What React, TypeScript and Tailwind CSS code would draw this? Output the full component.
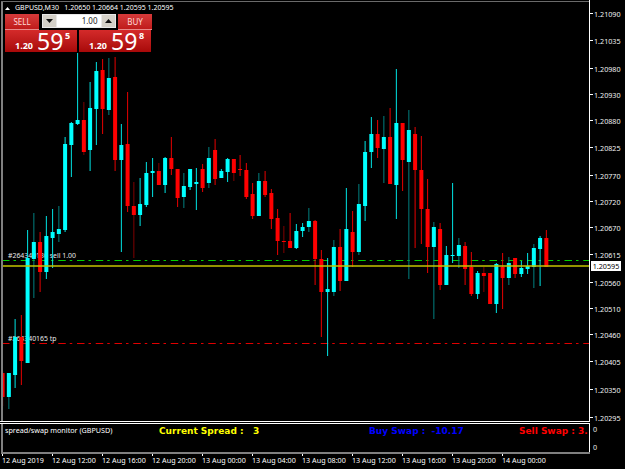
const CYAN = "#00ffff";
const RED = "#ff0000";
// [wickTop, bodyTop, bodyBottom, wickBottom, up(1)/down(0), dimmed wick(1)]
const candles: number[][] = [
  [371, 373, 397, 406, 0, 0], [373, 373, 397, 409, 1, 1], [319, 337, 375, 388, 1, 0], [315, 337, 361, 385, 0, 0],
  [230, 258, 363, 363, 1, 0], [213, 242, 259, 298, 1, 1], [232, 242, 272, 292, 0, 0], [216, 236, 272, 279, 1, 0],
  [209, 232, 238, 268, 1, 0], [206, 229, 234, 242, 1, 1], [137, 144, 230, 232, 1, 0], [122, 123, 145, 177, 1, 0],
  [53, 120, 124, 125, 1, 0], [102, 120, 152, 155, 0, 1], [82, 108, 150, 171, 1, 0], [62, 71, 109, 145, 1, 0],
  [59, 70, 109, 134, 0, 0], [58, 78, 110, 115, 1, 1], [57, 77, 160, 171, 0, 0], [124, 145, 160, 252, 1, 0],
  [92, 144, 206, 212, 0, 0], [182, 206, 215, 258, 0, 1], [178, 204, 215, 226, 1, 0], [162, 173, 205, 207, 1, 0],
  [158, 171, 173, 197, 1, 0], [163, 171, 185, 185, 0, 1], [157, 158, 185, 193, 1, 0], [137, 158, 169, 175, 0, 0],
  [169, 169, 198, 207, 0, 0], [173, 186, 197, 208, 1, 1], [169, 169, 187, 190, 1, 0], [168, 182, 184, 210, 1, 0],
  [164, 169, 188, 192, 0, 0], [147, 158, 183, 188, 1, 1], [139, 150, 179, 185, 0, 0], [169, 171, 178, 178, 1, 0],
  [158, 159, 172, 182, 1, 0], [159, 159, 173, 181, 0, 1], [155, 169, 170, 176, 0, 0], [163, 170, 197, 199, 0, 0],
  [183, 194, 216, 219, 0, 0], [173, 181, 216, 216, 1, 1], [171, 181, 195, 197, 0, 0], [189, 193, 219, 229, 0, 0],
  [209, 218, 241, 255, 0, 0], [226, 241, 242, 253, 0, 1], [213, 241, 248, 248, 0, 0], [224, 231, 248, 249, 1, 0],
  [223, 227, 231, 237, 1, 0], [208, 221, 227, 232, 1, 1], [220, 221, 259, 285, 0, 0], [250, 259, 292, 337, 0, 0],
  [258, 289, 292, 356, 1, 0], [240, 247, 292, 296, 1, 1], [229, 247, 281, 291, 0, 0], [188, 229, 281, 281, 1, 0],
  [211, 232, 252, 267, 0, 0], [184, 204, 252, 255, 1, 1], [141, 152, 206, 221, 1, 0], [117, 134, 152, 168, 1, 0],
  [120, 134, 148, 158, 0, 0], [116, 137, 149, 183, 1, 1], [108, 137, 184, 184, 0, 0], [69, 123, 185, 219, 1, 0],
  [123, 123, 160, 191, 0, 0], [110, 130, 162, 279, 1, 1], [127, 134, 170, 248, 0, 0], [136, 170, 209, 244, 0, 0],
  [179, 209, 247, 273, 0, 0], [222, 227, 247, 319, 1, 1], [223, 229, 285, 290, 0, 0], [246, 255, 285, 285, 1, 0],
  [183, 255, 256, 263, 1, 0], [238, 245, 256, 268, 1, 1], [242, 246, 269, 285, 0, 0], [252, 267, 294, 296, 0, 0],
  [271, 273, 294, 299, 1, 0], [267, 273, 276, 292, 0, 1], [273, 273, 304, 304, 0, 0], [263, 264, 304, 313, 1, 0],
  [253, 267, 278, 309, 0, 0], [257, 263, 278, 285, 1, 1], [258, 258, 274, 278, 0, 0], [261, 268, 274, 277, 1, 0],
  [253, 266, 269, 274, 1, 0], [244, 248, 267, 288, 1, 1], [236, 238, 249, 286, 1, 0], [230, 238, 267, 267, 0, 0],
];

const prices: [string, number][] = [
  ["1.21090", 27], ["1.21035", 28], ["1.20980", 26], ["1.20930", 26], ["1.20880", 27], ["1.20825", 28],
  ["1.20770", 26], ["1.20720", 26], ["1.20670", 27], ["1.20615", 28], ["1.20560", 26], ["1.20510", 26],
  ["1.20460", 27], ["1.20405", 28], ["1.20350", 28], ["1.20295", 3],
];

const dates = [
  "12 Aug 2019", "12 Aug 12:00", "12 Aug 16:00", "12 Aug 20:00", "13 Aug 00:00", "13 Aug 04:00",
  "13 Aug 08:00", "13 Aug 12:00", "13 Aug 16:00", "13 Aug 20:00", "14 Aug 00:00",
];

function Chart() {
  return (
    <svg className="absolute left-0 top-0 h-[419px] w-[586px]" viewBox="3 2 586 419">
      <line x1="2" x2="589" y1="260.5" y2="260.5" stroke="#00d000" strokeWidth="1" strokeDasharray="7.5 4 2.5 4.75" />
      <line x1="2" x2="589" y1="343.5" y2="343.5" stroke="#e00000" strokeWidth="1" strokeDasharray="7.5 4 2.5 4.75" />
      {candles.map(([wt, bt, bb, wb, up, dim], i) => {
        const c = 2.6 + 6.25 * i;
        const body = up ? CYAN : RED;
        const wick = up ? (dim ? "#008080" : "#00e4e4") : dim ? "#800000" : "#e60000";
        return (
          <g key={i}>
            <rect x={c - 0.5} y={wt} width={1} height={wb - wt} fill={wick} />
            <rect x={c - 2} y={bt} width={4} height={Math.max(bb - bt, 1)} fill={body} />
          </g>
        );
      })}
      <line x1="3" x2="589" y1="266" y2="266" stroke="#c4c400" strokeWidth="1.6" />
    </svg>
  );
}

function PriceTile({ big, sup }: { big: string; sup: string }) {
  return (
    <div className="flex h-[22px] w-[72px] items-start bg-gradient-to-b from-[#d42a2a] to-[#a80808] pl-[10px] text-white">
      <span className="mt-[11px] w-[22px] shrink-0 text-[9px] font-bold leading-[10px]">1.20</span>
      <span className="mt-[1px] w-[26px] shrink-0 text-center text-[23px] leading-[21px]">{big}</span>
      <span className="ml-[2px] mt-[1px] text-[9px] font-bold leading-[9px]">{sup}</span>
    </div>
  );
}

function TradeTab({ label }: { label: string }) {
  return (
    <div className="flex h-[16px] w-[34px] items-center justify-center border-b border-[#e88a8a] bg-gradient-to-b from-[#d63a3a] to-[#c01a1a] text-[8px] text-[#ffd8d8]">
      {label}
    </div>
  );
}

function StepButton({ up }: { up?: boolean }) {
  return (
    <div className="flex h-[12px] w-[13px] items-center justify-center bg-[#d4d0c8]">
      <svg width="7" height="4" viewBox="0 0 7 4">
        <path d={up ? "M3.5 0L7 4H0Z" : "M0 0H7L3.5 4Z"} fill="#111" />
      </svg>
    </div>
  );
}

export default function App() {
  return (
    <div className="flex h-[469px] w-[625px] flex-col overflow-hidden bg-black text-[7.2px] text-white [font-family:'Noto_Sans',sans-serif]">
      <div className="flex h-[421px]">
        <div className="ml-px flex w-[588px] flex-col">
          <div className="mt-px h-px bg-[#6a6a6a]" />
          <div className="relative h-[419px] border-l-2 border-[#808080]">
            <span className="absolute left-[5px] top-[249px] text-[6.9px] leading-[10px] text-[#e8e8e8]">#264340136 sell 1.00</span>
            <span className="absolute left-[5px] top-[332px] text-[6.9px] leading-[10px] text-[#e8e8e8]">#264340165 tp</span>
            <Chart />
            <div className="absolute left-[2px] top-[1px] flex h-[10px] items-center gap-[5px] text-[7px]">
              <svg width="5" height="3" viewBox="0 0 5 3">
                <path d="M2.5 0L5 3H0Z" fill="#fff" />
              </svg>
              <span className="whitespace-pre">GBPUSD,M30   1.20650 1.20664 1.20595 1.20595</span>
            </div>
            <div className="absolute left-[2px] top-[12px] flex w-[147px] flex-col">
              <div className="flex h-[16px] justify-between">
                <TradeTab label="SELL" />
                <div className="flex h-[14px] w-[74px] gap-px self-start bg-[#e8e8e8] p-px">
                  <StepButton />
                  <div className="flex-1 bg-white pr-[3px] text-right text-[8px] leading-[12px] text-[#222]">1.00</div>
                  <StepButton up />
                </div>
                <TradeTab label="BUY" />
              </div>
              <div className="flex gap-[2px]">
                <PriceTile big="59" sup="5" />
                <PriceTile big="59" sup="8" />
              </div>
            </div>
          </div>
        </div>
        <div className="relative flex w-[36px] flex-col border-l border-white pt-[7px] text-[#f0f0f0]">
          {prices.map(([p, h]) => (
            <div key={p} className="flex items-start" style={{ height: h }}>
              <span className="mt-[6px] h-px w-[3px] bg-white" />
              <span className="ml-px mt-[2.5px] leading-[8px]">{p}</span>
            </div>
          ))}
          <div className="absolute left-[1px] top-[261px] flex h-[10px] w-[30px] items-center justify-center bg-white text-black">1.20595</div>
        </div>
      </div>
      <div className="h-[3px] w-[590px] border-y border-white" />
      <div className="flex h-[28px]">
        <div className="ml-px flex w-[588px] items-start overflow-hidden border-l-2 border-[#808080]">
          <span className="mt-px w-[156px] shrink-0 pl-[2px] leading-[10px]">spread/swap monitor (GBPUSD)</span>
          <span className="mt-px w-[210px] shrink-0 whitespace-pre text-[9px] font-bold leading-[12px] text-[#ffff00] [font-family:'DejaVu_Sans',sans-serif]">Current Spread :   3</span>
          <span className="mt-px w-[150px] shrink-0 whitespace-pre text-[9px] font-bold leading-[12px] text-[#0000ff] [font-family:'DejaVu_Sans',sans-serif]">Buy Swap :  -10.17</span>
          <span className="mt-px shrink-0 whitespace-pre text-[9px] font-bold leading-[12px] text-[#ff0000] [font-family:'DejaVu_Sans',sans-serif]">Sell Swap : 3.</span>
        </div>
        <div className="flex w-[36px] flex-col border-l border-white pl-[3px] text-[#e8e8e8]">
          <span className="h-[19px] leading-[10px]">0</span>
          <span className="leading-[10px]">0</span>
        </div>
      </div>
      <div className="ml-px h-[2px] w-[589px] bg-[#808080]" />
      <div className="flex pl-[2px]">
        {dates.map((d) => (
          <div key={d} className="flex w-[50px] shrink-0 flex-col">
            <span className="h-[2px] w-px bg-white" />
            <span className="whitespace-nowrap leading-[9px]">{d}</span>
          </div>
        ))}
      </div>
    </div>
  );
}
